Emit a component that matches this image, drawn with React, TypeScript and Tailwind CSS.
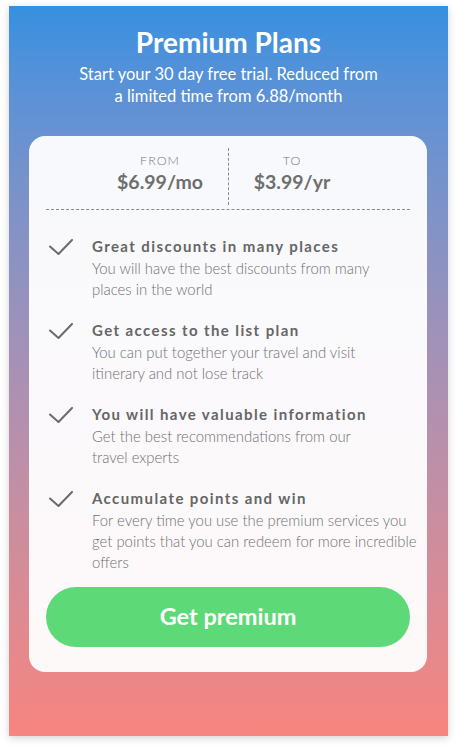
import React from 'react'

const features = [
  {
    title: 'Great discounts in many places',
    lines: ['You will have the best discounts from many', 'places in the world'],
  },
  {
    title: 'Get access to the list plan',
    lines: ['You can put together your travel and visit', 'itinerary and not lose track'],
  },
  {
    title: 'You will have valuable information',
    lines: ['Get the best recommendations from our', 'travel experts'],
  },
  {
    title: 'Accumulate points and win',
    lines: [
      'For every time you use the premium services you',
      'get points that you can redeem for more incredible',
      'offers',
    ],
  },
]

const CheckMark = () => (
  <svg width="24" height="16" viewBox="0 0 24 16" fill="none" className="shrink-0">
    <polyline
      points="1,7.5 9.5,15 23,1"
      stroke="#6b6b6b"
      strokeWidth="2"
      strokeLinecap="round"
      strokeLinejoin="round"
    />
  </svg>
)

export default function App() {
  return (
    <div className="w-[457px] h-[748px] bg-white pt-[6px] pl-[9px] font-['Lato',sans-serif]">
      <div className="w-[439px] h-[730px] bg-gradient-to-b from-[#3590e0] to-[#f7847f] shadow-[0_2px_8px_rgba(0,0,0,0.18)] flex flex-col items-center">
        {/* Header */}
        <h1 className="mt-[19px] text-[28px] leading-[34px] font-bold text-white">Premium Plans</h1>
        <p className="mt-[4px] text-[16.5px] leading-[22px] text-white text-center">
          Start your 30 day free trial. Reduced from
          <br />
          a limited time from 6.88/month
        </p>

        {/* Card */}
        <div className="mt-[29px] self-start ml-[20px] w-[398px] h-[536px] rounded-[16px] bg-white/95 px-[17px] pt-[12px]">
          <div className="flex h-[61px]">
            <div className="w-[182px] pr-[5px] flex flex-col items-end">
              <div className="w-[126px] flex flex-col items-center">
                <span className="text-[12.5px] leading-[16px] tracking-[0.08em] text-[#777] font-light mt-[5px]">FROM</span>
                <span className="text-[19.5px] leading-[24px] font-bold text-[#6e6e6e] mt-[1px]">$6.99/mo</span>
              </div>
            </div>
            <div className="h-[57px] border-l border-dashed border-[#8a8a8a]" />
            <div className="w-[126px] flex flex-col items-center">
              <span className="text-[12.5px] leading-[16px] tracking-[0.08em] text-[#777] font-light mt-[5px]">TO</span>
              <span className="text-[19.5px] leading-[24px] font-bold text-[#6e6e6e] mt-[1px]">$3.99/yr</span>
            </div>
          </div>
          <div className="border-t border-dashed border-[#8a8a8a]" />

          <div className="mt-[26px] flex flex-col gap-[20px]">
            {features.map((f) => (
              <div key={f.title} className="flex items-start">
                <div className="w-[46px] shrink-0 pl-[3px] pt-[3px]">
                  <CheckMark />
                </div>
                <div className="flex flex-col">
                  <span className="text-[15px] leading-[21px] font-bold tracking-[1.4px] text-[#666] whitespace-nowrap">{f.title}</span>
                  <span className="mt-[1px] text-[14.9px] leading-[21px] font-light text-[#707070] whitespace-nowrap">
                    {f.lines.map((l, i) => (
                      <React.Fragment key={i}>
                        {i > 0 && <br />}
                        {l}
                      </React.Fragment>
                    ))}
                  </span>
                </div>
              </div>
            ))}
          </div>

          <button className="mt-[14px] w-full h-[60px] rounded-full bg-[#5ed977] text-white text-[23.5px] font-bold">
            Get premium
          </button>
        </div>
      </div>
    </div>
  )
}
